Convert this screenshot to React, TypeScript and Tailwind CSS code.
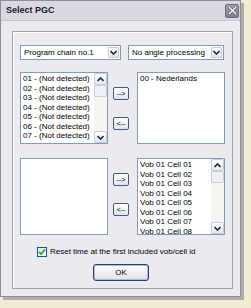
import React from 'react'

const font = "font-['Liberation_Sans',Arial,sans-serif]"

function Chevron({ up }: { up?: boolean }) {
  return (
    <svg width="7" height="5" viewBox="0 0 7 5">
      <path
        d={up ? 'M0.5 4 L3.5 1 L6.5 4' : 'M0.5 1 L3.5 4 L6.5 1'}
        fill="none"
        stroke="#2a2a33"
        strokeWidth="1.6"
      />
    </svg>
  )
}

function ScrollBtn({ up }: { up?: boolean }) {
  return (
    <div className="w-[13px] h-[12px] flex items-center justify-center border border-[#c3cbdc] rounded-[2px] bg-gradient-to-b from-[#ffffff] to-[#e4e8f1]">
      <Chevron up={up} />
    </div>
  )
}

function Dropdown({ label, width }: { label: string; width: string }) {
  return (
    <div className={`${width} h-[15px] flex border border-[#7f9db9] bg-white`}>
      <div className="flex-1 pl-[3px] text-[8px] leading-[13px] text-black whitespace-nowrap overflow-hidden">
        {label}
      </div>
      <div className="w-[11px] m-[1px] flex items-center justify-center border border-[#c3cbdc] rounded-[1px] bg-gradient-to-b from-[#ffffff] to-[#e2e6ef]">
        <Chevron />
      </div>
    </div>
  )
}

function ListBox({
  items,
  height,
  scroll,
}: {
  items: string[]
  height: string
  scroll?: boolean
}) {
  return (
    <div className={`w-[88px] ${height} flex border border-[#7f9db9] bg-white overflow-hidden`}>
      <div className="flex-1 pl-[2px] pt-[1px] text-[8px] leading-[9.5px] text-black whitespace-nowrap overflow-hidden">
        {items.map(i => (
          <div key={i}>{i}</div>
        ))}
      </div>
      {scroll && (
        <div className="w-[13px] flex flex-col bg-[#f5f5f2]">
          <ScrollBtn up />
          <div className="h-[12px] border border-[#c9cfdc] rounded-[2px] bg-[#eef0f5]"></div>
          <div className="flex-1"></div>
          <ScrollBtn />
        </div>
      )}
    </div>
  )
}

function SmallButton({ label }: { label: string }) {
  return (
    <div className="w-[16px] h-[13px] flex items-center justify-center border border-[#3d5a8a] rounded-[2px] bg-gradient-to-b from-[#ffffff] to-[#e2e4ec] text-[7px] leading-none text-black">
      {label}
    </div>
  )
}

function ButtonColumn() {
  return (
    <div className="w-[16px] ml-[5px] mr-[8px] pt-[15px] flex flex-col gap-[17px]">
      <SmallButton label="-->" />
      <SmallButton label="<--" />
    </div>
  )
}

export default function App() {
  const chains = [1, 2, 3, 4, 5, 6, 7, 8].map(n => `0${n} - (Not detected)`)
  const cells = [1, 2, 3, 4, 5, 6, 7, 8].map(n => `Vob 01 Cell 0${n}`)

  return (
    <div className={`w-[251px] h-[308px] bg-[#f1edd4] ${font}`}>
      <div className="w-[241px] h-[297px] flex flex-col border border-[#8e8e98] bg-[#ebebef] shadow-[3px_3px_0_#aeada6]">
        <div className="h-[20px] flex items-center justify-between pl-[5px] pr-[1px] bg-[#d9d9e1] border-b border-[#c4c4cc]">
          <span className="text-[9px] font-bold text-[#1a1a22]">Select PGC</span>
          <div className="w-[14px] h-[14px] flex items-center justify-center rounded-[2px] border border-[#6e6e78] bg-gradient-to-b from-[#a4a4ac] to-[#7c7c86]">
            <svg width="9" height="9" viewBox="0 0 9 9">
              <path d="M1 1 L8 8 M8 1 L1 8" stroke="#4a4a52" strokeWidth="2.6" />
              <path d="M1 1 L8 8 M8 1 L1 8" stroke="#ffffff" strokeWidth="1.5" />
            </svg>
          </div>
        </div>

        <div className="flex-1 pl-[11px] pt-[10px]">
          <div className="w-[221px] h-[258px] border border-[#a3a3ac] shadow-[inset_1px_1px_0_#ffffff] pl-[7px] pt-[13px] flex flex-col">
            <div className="flex gap-[7px]">
              <Dropdown label="Program chain no.1" width="w-[101px]" />
              <Dropdown label="No angle processing" width="w-[96px]" />
            </div>

            <div className="flex mt-[12px] h-[72px]">
              <ListBox items={chains} height="h-[72px]" scroll />
              <ButtonColumn />
              <ListBox items={['00 - Nederlands']} height="h-[72px]" />
            </div>

            <div className="flex mt-[14px] h-[77px]">
              <ListBox items={[]} height="h-[77px]" />
              <ButtonColumn />
              <ListBox items={cells} height="h-[77px]" scroll />
            </div>

            <div className="flex items-center mt-[12px] ml-[17px] h-[10px]">
              <div className="w-[10px] h-[10px] flex items-center justify-center border border-[#1c5180] bg-gradient-to-br from-[#e0e0e6] to-white">
                <svg width="8" height="8" viewBox="0 0 8 8">
                  <path d="M1 4 L3 6 L7 1.5" fill="none" stroke="#21a121" strokeWidth="1.6" />
                </svg>
              </div>
              <span className="ml-[3px] text-[8px] leading-none text-black whitespace-nowrap">
                Reset time at the first included vob/cell id
              </span>
            </div>

            <div className="mt-[7px] ml-[73px] w-[56px] h-[17px] flex items-center justify-center border border-[#2c3e6e] rounded-[3px] shadow-[inset_0_0_0_1px_#a8bce0] bg-gradient-to-b from-[#ffffff] to-[#e0e2ea] text-[8px] text-black">
              OK
            </div>
          </div>
        </div>
      </div>
    </div>
  )
}
